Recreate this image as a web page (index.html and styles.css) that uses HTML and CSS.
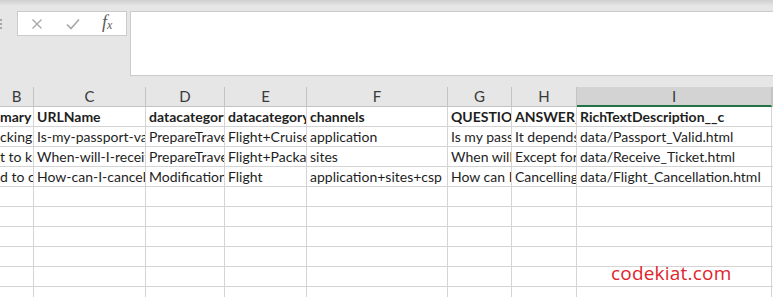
FILE: index.html
```html
<!DOCTYPE html>
<html lang="en">
  <head>
    <meta charset="UTF-8" />
    <meta name="viewport" content="width=device-width, initial-scale=1.0" />
    <title>Sheet</title>
    <link rel="stylesheet" href="styles.css">
  </head>
  <body>
    <div class="formula-bar">
      <div class="grip">
        <span></span><span></span><span></span>
      </div>
      <div class="fx-box">
        <svg class="icon" width="12" height="12" viewBox="0 0 12 12">
          <path d="M1.5 1.5 L10.5 10.5 M10.5 1.5 L1.5 10.5" stroke="#a6a6a6" stroke-width="1.3" fill="none" />
        </svg>
        <svg class="icon" width="14" height="12" viewBox="0 0 14 12">
          <path d="M1 6.5 L5 10.5 L13 1.5" stroke="#a6a6a6" stroke-width="1.6" fill="none" />
        </svg>
        <span class="fx">f<sub>x</sub></span>
      </div>
      <div class="formula-input"></div>
    </div>

    <div class="sheet">
      <div class="col-heads">
        <div>B</div>
        <div>C</div>
        <div>D</div>
        <div>E</div>
        <div>F</div>
        <div>G</div>
        <div>H</div>
        <div class="selected">I</div>
        <div></div>
      </div>

      <div class="cells">
        <div class="bold">mary</div>
        <div class="bold">URLName</div>
        <div class="bold">datacategory</div>
        <div class="bold">datacategory</div>
        <div class="bold">channels</div>
        <div class="bold">QUESTION</div>
        <div class="bold">ANSWER_</div>
        <div class="bold">RichTextDescription__c</div>
        <div></div>

        <div>cking pa</div>
        <div>Is-my-passport-valid</div>
        <div>PrepareTravel</div>
        <div>Flight+Cruise</div>
        <div>application</div>
        <div>Is my passport</div>
        <div>It depends</div>
        <div>data/Passport_Valid.html</div>
        <div></div>

        <div>t to kno</div>
        <div>When-will-I-receive</div>
        <div>PrepareTravel</div>
        <div>Flight+Package</div>
        <div>sites</div>
        <div>When will</div>
        <div>Except for</div>
        <div>data/Receive_Ticket.html</div>
        <div></div>

        <div>d to can</div>
        <div>How-can-I-cancel-my</div>
        <div>Modification</div>
        <div>Flight</div>
        <div>application+sites+csp</div>
        <div>How can I</div>
        <div>Cancelling</div>
        <div>data/Flight_Cancellation.html</div>
        <div></div>

        <div></div><div></div><div></div><div></div><div></div><div></div><div></div><div></div><div></div>
        <div></div><div></div><div></div><div></div><div></div><div></div><div></div><div></div><div></div>
        <div></div><div></div><div></div><div></div><div></div><div></div><div></div><div></div><div></div>
        <div></div><div></div><div></div><div></div><div></div><div></div><div></div><div></div><div></div>
        <div></div><div></div><div></div><div></div><div></div><div></div><div></div><div></div><div></div>
        <div></div><div></div><div></div><div></div><div></div><div></div><div></div><div></div><div></div>
      </div>

      <div class="watermark">codekiat.com</div>
    </div>
  </body>
</html>
```

FILE: styles.css
```css
body {
  margin: 0;
  width: 773px;
  height: 297px;
  overflow: hidden;
  background-color: #e6e6e6;
  font-family: Lato, "Liberation Sans", sans-serif;
  color: #1e1e1e;
}

.formula-bar {
  display: flex;
  align-items: flex-start;
  height: 76px;
  padding-top: 11px;
  box-sizing: border-box;
  background: linear-gradient(#cfcfcf 0, #e6e6e6 6px);
}

.grip {
  display: flex;
  flex-direction: column;
  gap: 2px;
  width: 17px;
  padding-top: 8px;
}

.grip span {
  display: block;
  width: 2px;
  height: 2px;
  background-color: #a8a8a8;
}

.fx-box {
  display: flex;
  align-items: center;
  width: 110px;
  height: 25px;
  box-sizing: border-box;
  background-color: #fff;
  border: 1px solid #cbcbcb;
  padding-left: 13px;
}

.icon {
  margin-right: 23px;
}

.fx-box .icon:nth-child(2) {
  margin-right: 22px;
}

.fx {
  font-family: "Liberation Serif", serif;
  font-style: italic;
  font-size: 18px;
  line-height: 18px;
  color: #5a5a5a;
}

.fx sub {
  font-size: 12px;
  vertical-align: -1px;
}

.formula-input {
  flex: 1;
  height: 65px;
  margin-left: 3px;
  box-sizing: border-box;
  background-color: #fff;
  border: 1px solid #cbcbcb;
  border-right: none;
}

.sheet {
  position: relative;
  margin-top: 11px;
}

.col-heads,
.cells {
  display: grid;
  grid-template-columns: 34px 112px 79px 82px 141px 64px 65px 195px 1fr;
}

.col-heads div {
  height: 20px;
  box-sizing: border-box;
  border-right: 1px solid #c4c4c4;
  border-bottom: 1px solid #c4c4c4;
  text-align: center;
  font-size: 15px;
  line-height: 18px;
  color: #3a3a3a;
}

.col-heads .selected {
  background-color: #d3d3d3;
  border-bottom: 2px solid #217346;
}

.cells {
  background-color: #fff;
}

.cells div {
  height: 20px;
  box-sizing: border-box;
  border-right: 1px solid #d4d4d4;
  border-bottom: 1px solid #d4d4d4;
  padding-left: 3px;
  font-size: 14px;
  line-height: 20px;
  white-space: nowrap;
  overflow: hidden;
}

.cells div:nth-child(9n + 1) {
  padding-left: 0;
}

.cells .bold {
  font-weight: bold;
}

.watermark {
  position: absolute;
  left: 611px;
  top: 173px;
  font-family: "Open Sans", sans-serif;
  font-size: 19px;
  letter-spacing: 0.2px;
  color: #e0242c;
}
```
